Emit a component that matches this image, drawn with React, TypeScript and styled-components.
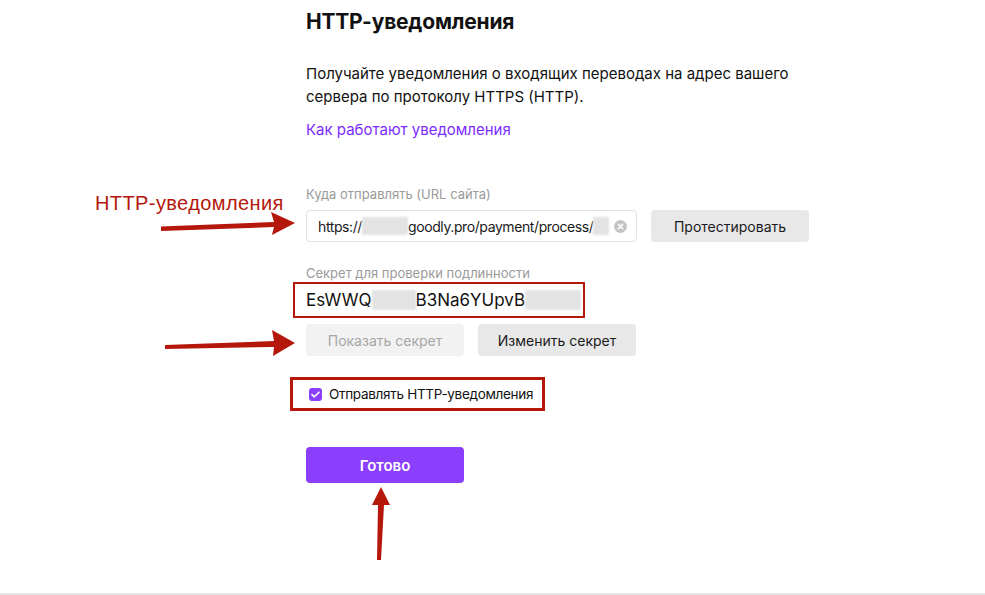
import React from 'react'
import styled, { createGlobalStyle } from 'styled-components'

const GlobalStyle = createGlobalStyle`
  html, body {
    margin: 0;
    padding: 0;
    background: #fff;
  }
  body {
    font-family: Inter, "Noto Sans", sans-serif;
    color: #111;
  }
`

const Page = styled.div`
  position: relative;
  width: 985px;
  height: 593px;
  border-bottom: 2px solid #e6e6e6;
  overflow: hidden;
`

const Column = styled.main`
  display: flex;
  flex-direction: column;
  align-items: flex-start;
  width: 520px;
  margin-left: 306px;
  padding-top: 8px;
`

const Title = styled.h1`
  margin: 0;
  font-size: 21px;
  line-height: 28px;
  font-weight: 700;
  letter-spacing: -0.2px;
`

const Lead = styled.p`
  margin: 26px 0 0;
  font-size: 15px;
  line-height: 23px;
  width: 510px;
`

const HelpLink = styled.a`
  margin-top: 11px;
  font-size: 15px;
  line-height: 22px;
  color: #7b2cff;
  text-decoration: none;
  cursor: pointer;
`

const Field = styled.div<{ $top: number }>`
  display: flex;
  flex-direction: column;
  margin-top: ${(p) => p.$top}px;
`

const Label = styled.label`
  font-size: 13px;
  line-height: 16px;
  color: #9a9a9a;
`

const Row = styled.div`
  display: flex;
  align-items: center;
  gap: 14px;
`

const Input = styled.div`
  display: flex;
  align-items: center;
  box-sizing: border-box;
  width: 331px;
  height: 32px;
  margin-top: 8px;
  padding: 0 9px 0 11px;
  border: 1px solid #e1e1e1;
  border-radius: 4px;
  font-size: 14px;
  letter-spacing: -0.4px;
  color: #1a1a1a;
  white-space: nowrap;
`

const Hidden = styled.span<{ $w: number; $h?: number }>`
  display: inline-block;
  width: ${(p) => p.$w}px;
  height: ${(p) => p.$h ?? 18}px;
  background: #e3e3e3;
  filter: blur(1px);
  vertical-align: middle;
`

const ClearIcon = styled.span`
  margin-left: auto;
  display: inline-flex;
`

const Button = styled.button<{ $variant?: 'grey' | 'disabled' | 'primary' }>`
  box-sizing: border-box;
  flex-shrink: 0;
  width: 158px;
  height: ${(p) => (p.$variant === 'primary' ? 36 : 32)}px;
  border: none;
  border-radius: 4px;
  font-family: inherit;
  font-size: ${(p) => (p.$variant === 'primary' ? 15 : 14)}px;
  font-weight: ${(p) => (p.$variant === 'primary' ? 600 : 400)};
  cursor: pointer;
  background: ${(p) =>
    p.$variant === 'primary' ? '#8b3ffd' : p.$variant === 'disabled' ? '#f2f2f2' : '#e8e8e8'};
  color: ${(p) =>
    p.$variant === 'primary' ? '#fff' : p.$variant === 'disabled' ? '#a6a6a6' : '#1a1a1a'};
`

const TestButton = styled(Button)`
  margin-top: 8px;
`

const SecretBox = styled.div`
  box-sizing: border-box;
  display: flex;
  align-items: center;
  width: 292px;
  height: 36px;
  margin: 1px 0 6px -13px;
  padding-left: 11px;
  border: 2px solid #b5170b;
  font-size: 17px;
  white-space: nowrap;
`

const CheckFrame = styled.div`
  box-sizing: border-box;
  display: flex;
  align-items: center;
  gap: 7px;
  width: 255px;
  height: 34px;
  margin: 21px 0 0 -16px;
  padding-left: 16px;
  border: 3px solid #b5170b;
  font-size: 13.5px;
  letter-spacing: -0.3px;
  white-space: nowrap;
`

const Check = styled.span`
  display: inline-flex;
  align-items: center;
  justify-content: center;
  width: 13px;
  height: 13px;
  border-radius: 3px;
  background: #8b3ffd;
`

const Done = styled.div`
  margin-top: 36px;
`

const Note = styled.div`
  position: absolute;
  left: 95px;
  top: 192px;
  font-family: "Liberation Sans", Arial, sans-serif;
  font-size: 20px;
  letter-spacing: 0.4px;
  color: #b5170b;
`

const Overlay = styled.svg`
  position: absolute;
  left: 0;
  top: 0;
  pointer-events: none;
`

const red = '#b5170b'

export default function App() {
  return (
    <Page>
      <GlobalStyle />
      <Column>
        <Title>HTTP-уведомления</Title>
        <Lead>
          Получайте уведомления о входящих переводах на адрес вашего сервера по протоколу HTTPS (HTTP).
        </Lead>
        <HelpLink>Как работают уведомления</HelpLink>

        <Field $top={45}>
          <Label>Куда отправлять (URL сайта)</Label>
          <Row>
            <Input>
              https://<Hidden $w={46} />goodly.pro/payment/process/<Hidden $w={16} />
              <ClearIcon>
                <svg width="13" height="13" viewBox="0 0 13 13">
                  <circle cx="6.5" cy="6.5" r="6.5" fill="#c4c4c4" />
                  <path d="M4.3 4.3l4.4 4.4M8.7 4.3l-4.4 4.4" stroke="#fff" strokeWidth="1.6" strokeLinecap="round" />
                </svg>
              </ClearIcon>
            </Input>
            <TestButton>Протестировать</TestButton>
          </Row>
        </Field>

        <Field $top={23}>
          <Label>Секрет для проверки подлинности</Label>
          <SecretBox>
            EsWWQ<Hidden $w={44} $h={20} />B3Na6YUpvB<Hidden $w={56} $h={20} />
          </SecretBox>
          <Row>
            <Button $variant="disabled">Показать секрет</Button>
            <Button>Изменить секрет</Button>
          </Row>
        </Field>

        <CheckFrame>
          <Check>
            <svg width="9" height="7" viewBox="0 0 9 7">
              <path d="M1 3.6l2.3 2.2L8 1.2" stroke="#fff" strokeWidth="1.6" fill="none" strokeLinecap="round" strokeLinejoin="round" />
            </svg>
          </Check>
          Отправлять HTTP-уведомления
        </CheckFrame>

        <Done>
          <Button $variant="primary">Готово</Button>
        </Done>
      </Column>

      <Note>HTTP-уведомления</Note>
      <Overlay width="985" height="593" viewBox="0 0 985 593">
        <path d="M161 226.5 L274 222 L271 212 L295 223 L272 235 L274 227 L161 231 Z" fill={red} />
        <path d="M165 345 L274 341 L272 330 L295 343 L273 356 L274 347 L165 349 Z" fill={red} />
        <path d="M377 560 L378 505 L372 505 L381 487 L390 505 L384 505 L381 560 Z" fill={red} />
      </Overlay>
    </Page>
  )
}
